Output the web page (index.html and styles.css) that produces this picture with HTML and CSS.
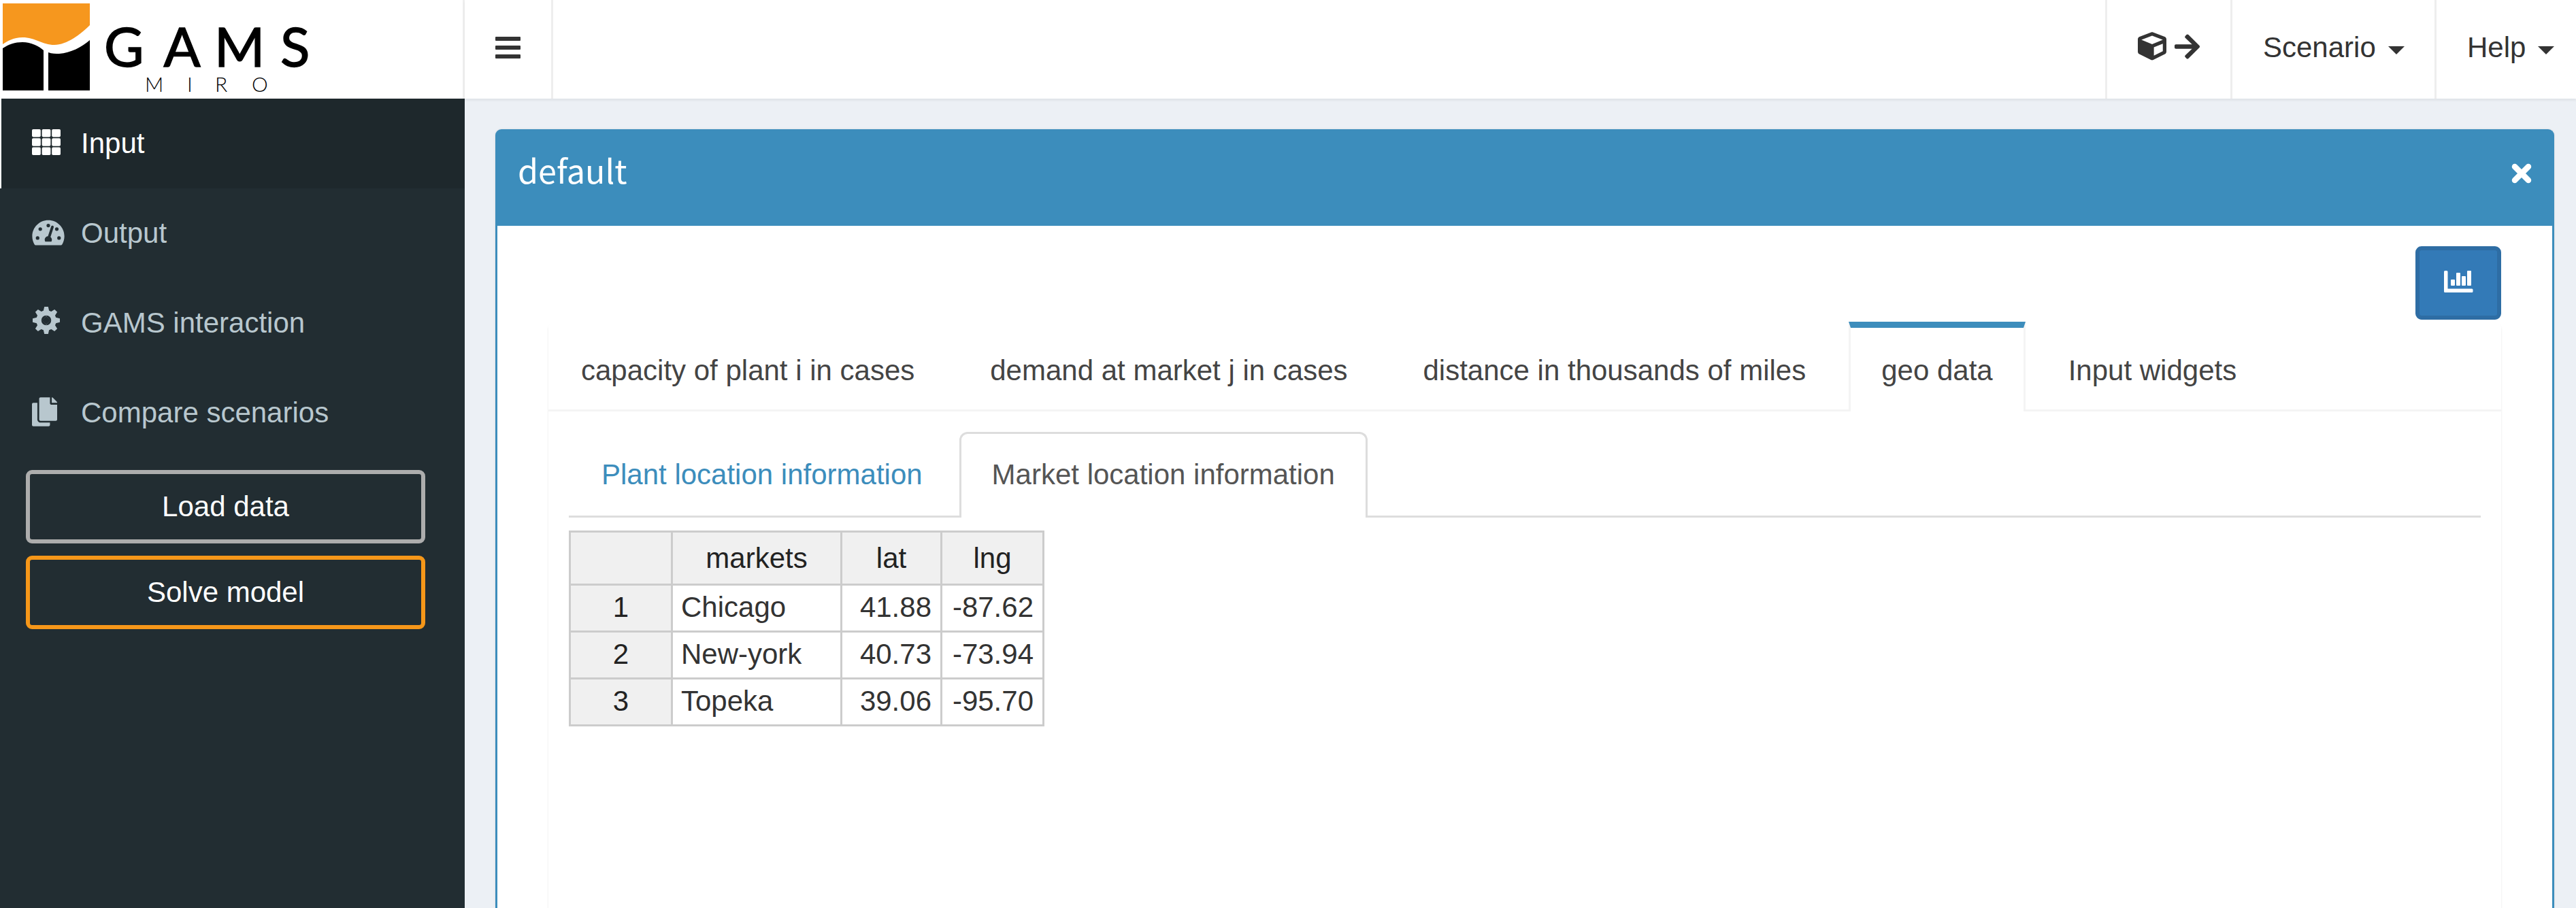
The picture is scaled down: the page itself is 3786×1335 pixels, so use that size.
FILE: index.html
```html
<!DOCTYPE html>
<html lang="en">
<head>
<meta charset="utf-8">
<title>GAMS MIRO</title>
<link rel="stylesheet" href="styles.css">
</head>
<body>
<div class="app">
  <aside class="sidebar">
    <div class="brand">
      <svg class="logo" viewBox="0 0 480 145" role="img" aria-label="GAMS MIRO">
        <path fill="#f6971e" d="M4 5H132V37C119 50 98 66 80 66C62 66 52 55 33 55C20 55 10 61 4 65Z"/>
        <path fill="#000" d="M4 71C13 65 22 62 33 62C46 62 57 68 64 74V133H4Z"/>
        <path fill="#000" d="M71 77C76 79 82 79 87 79C104 78 120 69 132 59V133H71Z"/>
        <text class="logo-gams" x="153 240.500 315 412" y="98">GAMS</text>
        <text class="logo-miro" x="213 275 316 370" y="135">MIRO</text>
      </svg>
    </div>
    <nav class="menu">
      <a class="menu-item active">
        <svg class="mi mi-th" viewBox="0 0 42 38"><g id="row"><rect width="12.800" height="11.400" rx="1.800"/><rect x="14.600" width="12.800" height="11.400" rx="1.800"/><rect x="29.200" width="12.800" height="11.400" rx="1.800"/></g><use href="#row" y="13.300"/><use href="#row" y="26.600"/></svg>
        <span>Input</span>
      </a>
      <a class="menu-item">
        <svg class="mi mi-wide" viewBox="0 0 576 512"><path fill-rule="evenodd" d="M288 32C129 32 0 161 0 320c0 53 14 102 39 145 6 9 16 15 27 15h444c11 0 21-6 27-15 25-43 39-92 39-145C576 161 447 32 288 32zM288 96a32 32 0 1 1 0 64 32 32 0 1 1 0-64zM96 320a32 32 0 1 1 0 64 32 32 0 1 1 0-64zM144 160a32 32 0 1 1 0 64 32 32 0 1 1 0-64zM480 320a32 32 0 1 1 0 64 32 32 0 1 1 0-64zM440 160a32 32 0 1 1 0 64 32 32 0 1 1 0-64zM343 416H233c-6-9-9-20-9-32 0-33 26-61 58-64l57-173c4-12 18-19 30-15s19 18 15 30l-57 173c15 12 25 29 25 49 0 12-3 23-9 32z"/></svg>
        <span>Output</span>
      </a>
      <a class="menu-item">
        <svg class="mi mi-cog" viewBox="-20 -20 40 40"><g id="teeth"><path d="M-4.200 -14L-2.800 -20H2.800L4.200 -14V14L2.800 20H-2.800L-4.200 14ZM-4.200-8H4.200V8H-4.200Z" fill-rule="evenodd"/></g><use href="#teeth" transform="rotate(45)"/><use href="#teeth" transform="rotate(90)"/><use href="#teeth" transform="rotate(135)"/><circle r="11" class="cog-ring"/></svg>
        <span>GAMS interaction</span>
      </a>
      <a class="menu-item">
        <svg class="mi mi-copy" viewBox="0 0 448 512"><path d="M320 448v40c0 13.300-10.700 24-24 24H24c-13.300 0-24-10.700-24-24V120c0-13.300 10.700-24 24-24h72v296c0 30.900 25.100 56 56 56h168zm0-344V0H152c-13.300 0-24 10.700-24 24v368c0 13.300 10.700 24 24 24h272c13.300 0 24-10.700 24-24V128H344c-13.200 0-24-10.800-24-24zm121-31L375 7A24 24 0 0 0 358 0H352v96h96v-6.100a24 24 0 0 0-7-17z"/></svg>
        <span>Compare scenarios</span>
      </a>
    </nav>
    <div class="actions">
      <button class="side-btn">Load data</button>
      <button class="side-btn solve">Solve model</button>
    </div>
  </aside>

  <div class="page">
    <header class="topbar">
      <a class="toggle"><span></span><span></span><span></span></a>
      <div class="top-menu">
        <a class="top-item export">
          <svg class="cube" viewBox="0 0 512 512"><path d="M239.100 6.300l-208 78c-18.700 7-31.100 25-31.100 45v225.100c0 18.200 10.300 34.800 26.500 42.900l208 104c13.500 6.800 29.400 6.800 42.900 0l208-104c16.300-8.100 26.500-24.800 26.500-42.900V129.300c0-20-12.400-37.900-31.100-44.900l-208-78C262 2.200 250 2.200 239.100 6.300zM256 68.400l192 72v1.100l-192 78-192-78v-1.100l192-72zm32 356V275.500l160-65v133.900l-160 80z"/></svg>
          <svg class="arrow" viewBox="0 0 448 448"><path d="M190.500 34.900l22.200-22.200c9.400-9.400 24.600-9.400 33.900 0L441 207c9.400 9.400 9.400 24.600 0 33.900L246.600 435.300c-9.400 9.400-24.600 9.400-33.900 0l-22.200-22.200c-9.500-9.500-9.300-25 .4-34.300L311.400 264H24c-13.300 0-24-10.700-24-24v-32c0-13.300 10.700-24 24-24h287.400L190.900 69.200c-9.800-9.300-10-24.800-.4-34.300z"/></svg>
        </a>
        <a class="top-item scenario">Scenario<i class="caret"></i></a>
        <a class="top-item help">Help<i class="caret"></i></a>
      </div>
    </header>

    <main class="content">
      <section class="box">
        <div class="box-header">
          <h3>default</h3>
          <svg class="close" viewBox="0 0 30 30"><path d="M5 5L25 25M25 5L5 25"/></svg>
        </div>
        <div class="box-body">
          <div class="tools">
            <button class="chart-btn"><svg viewBox="0 0 42 32"><path d="M0 1.500Q0 0 1.500 0H4Q5.500 0 5.500 1.500V26.500H41Q42.500 26.500 42.500 28V30.500Q42.500 32 41 32H1.500Q0 32 0 30.500Z"/><rect x="10" y="13" width="6" height="9" rx="1"/><rect x="18" y="3" width="6" height="19" rx="1"/><rect x="26" y="8" width="6" height="14" rx="1"/><rect x="34" y="0" width="6" height="22" rx="1"/></svg></button>
          </div>
          <div class="tabs-panel">
            <div class="tabs">
              <a class="tab">capacity of plant i in cases</a>
              <a class="tab">demand at market j in cases</a>
              <a class="tab">distance in thousands of miles</a>
              <a class="tab active">geo data</a>
              <a class="tab">Input widgets</a>
            </div>
            <div class="tab-content">
              <div class="subtabs">
                <a class="subtab">Plant location information</a>
                <a class="subtab active">Market location information</a>
              </div>
              <table class="grid">
                <colgroup><col class="c-row"><col class="c-market"><col class="c-lat"><col class="c-lng"></colgroup>
                <thead><tr><th></th><th>markets</th><th>lat</th><th>lng</th></tr></thead>
                <tbody>
                  <tr><th>1</th><td>Chicago</td><td class="num">41.88</td><td class="num">-87.62</td></tr>
                  <tr><th>2</th><td>New-york</td><td class="num">40.73</td><td class="num">-73.94</td></tr>
                  <tr><th>3</th><td>Topeka</td><td class="num">39.06</td><td class="num">-95.70</td></tr>
                </tbody>
              </table>
            </div>
          </div>
        </div>
      </section>
    </main>
  </div>
</div>
</body>
</html>
```
FILE: styles.css
```css
* { box-sizing: border-box; }

body {
  margin: 0;
  height: 1335px;
  overflow: hidden;
  font: 42px/60px "Liberation Sans", Arial, sans-serif;
  color: #333;
  background: #ecf0f5;
}

button { font: inherit; margin: 0; padding: 0; }

.app { display: flex; height: 1335px; }

/* Sidebar */
.sidebar { width: 683px; flex: none; background: #222d32; }
.brand { height: 145px; background: #fff; border-right: 3px solid #eee; }
.logo { display: block; width: 480px; height: 145px; }
.logo-gams { font: 400 80px Lato, sans-serif; stroke: #000; stroke-width: 1.5px; }
.logo-miro { font: 300 30px Lato, sans-serif; }

.menu-item {
  display: flex;
  align-items: center;
  height: 132px;
  padding-left: 47px;
  color: #b8c7ce;
}
.menu-item.active {
  color: #fff;
  background: #1e282c;
  border-left: 2px solid #fff;
  padding-left: 45px;
}
.menu-item span { margin-left: 30px; }
.mi { width: 42px; height: 42px; fill: currentColor; }
.mi-th { height: 38px; margin-top: -4px; }
.mi-wide { width: 48px; margin-top: -3px; }
.mi-wide + span { margin-left: 24px; }
.mi-cog { height: 40px; margin-top: -8px; }
.cog-ring { fill: none; stroke: currentColor; stroke-width: 7.5; }
.mi-copy { width: 37px; height: 43px; margin-top: -3px; }
.mi-copy + span { margin-left: 35px; }

.actions {
  display: flex;
  flex-direction: column;
  gap: 18px;
  padding: 18px 58px 0 38px;
}
.side-btn {
  height: 108px;
  color: #fff;
  background: transparent;
  border: 6px solid #adadad;
  border-radius: 9px;
}
.side-btn.solve { border-color: #f69719; }

/* Top bar */
.page { flex: 1; min-width: 0; display: flex; flex-direction: column; }
.topbar {
  display: flex;
  justify-content: space-between;
  height: 145px;
  flex: none;
  background: #fff;
  box-shadow: 0 3px 3px rgba(0, 0, 0, .05);
}
.toggle {
  display: flex;
  flex-direction: column;
  gap: 7px;
  width: 130px;
  padding: 54px 0 0 45px;
  border-right: 3px solid #eee;
}
.toggle span { width: 37px; height: 6px; border-radius: 1px; background: #333; }
.top-menu { display: flex; }
.top-item {
  display: flex;
  align-items: center;
  padding-bottom: 5px;
  border-left: 3px solid #eee;
}
.export { width: 184px; padding-left: 45px; padding-bottom: 9px; }
.export svg { fill: #333; }
.cube { width: 42px; height: 42px; }
.arrow { width: 37px; height: 37px; margin-left: 12px; }
.scenario { width: 300px; padding-left: 45px; }
.help { width: 208px; padding-left: 45px; }
.caret {
  margin: 8px 0 0 18px;
  border: 12px solid transparent;
  border-top-color: #333;
  border-bottom: 0;
}

/* Box */
.content { flex: 1; min-height: 0; padding: 45px 32px 0 45px; }
.box {
  height: 1145px;
  background: #fff;
  border: 3px solid #3c8dbc;
  border-bottom: 0;
  border-radius: 9px 9px 0 0;
  box-shadow: 0 0 3px rgba(0, 0, 0, .1);
}
.box-header {
  display: flex;
  justify-content: space-between;
  height: 139px;
  padding: 26px 30px 0;
  background: #3c8dbc;
}
.box-header h3 {
  margin: 0;
  font: 400 48.5px/60px "Noto Sans CJK SC", sans-serif;
  color: #fff;
}
.close { width: 30px; height: 30px; margin-top: 21px; stroke: #fff; stroke-width: 8.5; stroke-linecap: round; }
.box-body { padding: 30px 75px 0; }
.tools { display: flex; justify-content: flex-end; }
.chart-btn {
  display: flex;
  align-items: center;
  justify-content: center;
  width: 126px;
  height: 108px;
  padding-bottom: 4px;
  background: #337ab7;
  border: 6px solid #2e6da4;
  border-radius: 9px;
}
.chart-btn svg { width: 42px; height: 32px; fill: #fff; overflow: visible; }

/* Outer tabs */
.tabs-panel {
  height: 862px;
  margin-top: 3px;
  border-radius: 9px 9px 0 0;
  background: #fff;
  box-shadow: 0 3px 3px rgba(0, 0, 0, .1);
}
.tabs {
  display: flex;
  gap: 15px;
  height: 132px;
  border-bottom: 3px solid #f4f4f4;
  color: #444;
}
.tab {
  height: 132px;
  padding: 33px 45px 0;
  border: solid transparent;
  border-width: 9px 3px 0;
  white-space: nowrap;
}
.tab.active {
  background:
    linear-gradient(#3c8dbc, #3c8dbc) top / 100% 9px no-repeat border-box,
    #fff;
  border-left-color: #f4f4f4;
  border-right-color: #f4f4f4;
  border-top-color: #3c8dbc;
}
.tab-content { padding: 30px; }

/* Inner tabs */
.subtabs {
  display: flex;
  gap: 6px;
  height: 126px;
  border-bottom: 3px solid #ddd;
}
.subtab {
  height: 126px;
  padding: 30px 45px 0;
  border: 3px solid transparent;
  border-bottom: 0;
  border-radius: 12px 12px 0 0;
  color: #3c8dbc;
  white-space: nowrap;
}
.subtab.active { color: #555; background: #fff; border-color: #ddd; }

/* Data grid */
.grid {
  width: 699px;
  margin-top: 19px;
  table-layout: fixed;
  border-collapse: collapse;
}
.c-row { width: 150px; }
.c-market { width: 249px; }
.c-lat { width: 147px; }
.c-lng { width: 150px; }
.grid th, .grid td {
  height: 69px;
  padding: 0 13px 3px 12px;
  border: 3px solid #ccc;
  line-height: 60px;
}
.grid th { font-weight: 400; color: #222; background: #f0f0f0; padding: 0 0 3px; }
.grid thead th { height: 78px; padding-bottom: 0; }
.grid td { background: #fff; }
.grid .num { text-align: right; }
```
